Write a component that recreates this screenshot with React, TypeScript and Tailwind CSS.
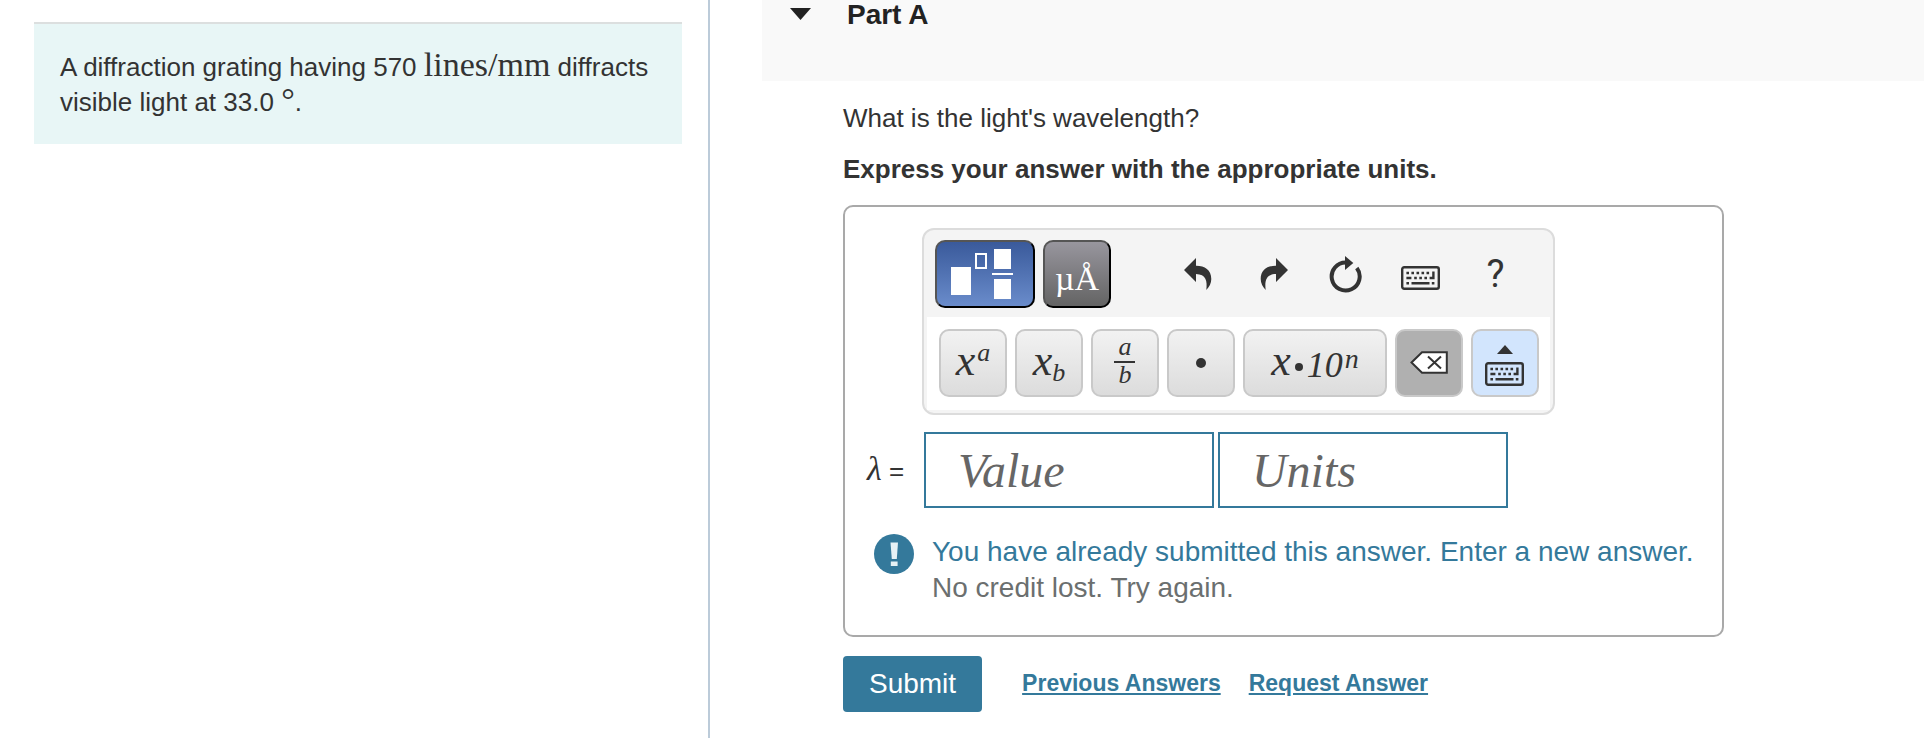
import React, { useState } from 'react';

const KeyboardIcon: React.FC = () => (
  <svg width="39" height="24" viewBox="0 0 39 24" fill="none" stroke="#333" strokeWidth="2.4" aria-hidden="true">
    <rect x="1.200" y="1.200" width="36.600" height="21.600" rx="2" />
    <path d="M5.400 7h2.600M10.400 7h2.600M15.500 7h2.600M20.500 7h2.600M25.500 7h2.600" />
    <path d="M5.400 12h5M13.200 12h2.600M18.300 12h2.600M23.400 12h2.600M28.600 12h5M32.400 5.500v7.600" />
    <path d="M5.400 17.200h2.600M10.500 17.200h18M30.800 17.200h2.600" />
  </svg>
);

const UndoIcon: React.FC = () => (
  <svg width="34" height="32" viewBox="-6 0 34 32" fill="#333" aria-hidden="true">
    <path d="M0 12 12 0v7.700C20.500 7.600 27.300 11.500 27.300 21c0 4-2 8-5 11 1.200-9-.3-15.800-10.300-16V24z" />
  </svg>
);

const RedoIcon: React.FC = () => (
  <svg width="36" height="32" viewBox="-8 0 36 32" fill="#333" aria-hidden="true">
    <path d="M28 12 16 0v7.700C7.500 7.600.7 11.500.7 21c0 4 2 8 5 11-1.200-9 .3-15.800 10.300-16V24z" />
  </svg>
);

const ResetIcon: React.FC = () => (
  <svg width="33" height="37" viewBox="0 0 33 37" aria-hidden="true">
    <path d="M17 6.500A14 14 0 1 0 27.800 12" fill="none" stroke="#333" strokeWidth="4" />
    <path d="M16 0 24.300 7 16 14z" fill="#333" />
  </svg>
);

const TemplatesIcon: React.FC = () => (
  <svg width="68" height="52" viewBox="0 0 68 52" fill="none" aria-hidden="true">
    <rect x="0" y="19" width="20" height="28" fill="#fff" />
    <rect x="25" y="6" width="10" height="14" stroke="#fff" strokeWidth="2" />
    <rect x="43" y="1" width="17" height="20" fill="#fff" />
    <path d="M41 26h21" stroke="#fff" strokeWidth="2" />
    <rect x="43" y="31" width="17" height="20" fill="#fff" />
  </svg>
);

const BackspaceIcon: React.FC = () => (
  <svg width="38" height="23" viewBox="0 0 38 23" aria-hidden="true">
    <path d="M1.500 11.500 12 1.200h24.800v20.600H12z" fill="#fff" stroke="#333" strokeWidth="2" />
    <path d="m18 5.500 13 12M31 5.500l-13 12" stroke="#333" strokeWidth="2" />
  </svg>
);

const AlertIcon: React.FC = () => (
  <svg width="40" height="40" viewBox="0 0 40 40" className="shrink-0" aria-hidden="true">
    <circle cx="20" cy="20" r="20" fill="#34799b" />
    <path d="M16.500 8.500h7.500L22.800 25h-5z" fill="#e6f1f5" />
    <rect x="16.800" y="27.500" width="6.800" height="4.500" fill="#e6f1f5" />
  </svg>
);

interface ButtonProps {
  label: string;
  className?: string;
  children: React.ReactNode;
}

const ToolButton: React.FC<ButtonProps> = ({ label, children }) => (
  <button type="button" aria-label={label} className="flex h-[68px] w-[75px] items-center justify-center">
    {children}
  </button>
);

const KeyButton: React.FC<ButtonProps> = ({
  label,
  className = 'w-[68px] bg-linear-to-b from-[#f2f2f2] to-[#dcdcdc]',
  children,
}) => (
  <button
    type="button"
    aria-label={label}
    className={`flex h-[68px] items-center justify-center rounded-[10px] border-2 border-[#c9c9c9] font-['Liberation_Serif',serif] italic leading-none text-[#333] ${className}`}
  >
    {children}
  </button>
);

const MathToolbar: React.FC = () => (
  <div className="flex w-fit flex-col rounded-xl border-2 border-[#dcdcdc] bg-[#f4f4f4] px-[3px] pb-[3px]">
    <div className="flex items-start justify-between pt-[10px] pr-[17px] pb-[9px] pl-2">
      <div className="flex gap-2">
        <button
          type="button"
          aria-label="Templates"
          className="flex h-[68px] w-[100px] items-center justify-center rounded-[10px] border-2 border-t-[#555] border-r-black border-b-black border-l-[#555] bg-linear-to-b from-[#3a5a9b] to-[#6a8ccb]"
        >
          <TemplatesIcon />
        </button>
        <button
          type="button"
          aria-label="Symbols"
          className="flex h-[68px] w-[68px] items-center justify-center rounded-[10px] border-2 border-t-[#555] border-r-black border-b-black border-l-[#555] bg-linear-to-b from-[#98969e] to-[#646464] pt-2 font-['Liberation_Serif',serif] text-[34px] text-white"
        >
          µÅ
        </button>
      </div>
      <div className="flex">
        <ToolButton label="Undo"><UndoIcon /></ToolButton>
        <ToolButton label="Redo"><RedoIcon /></ToolButton>
        <ToolButton label="Reset"><ResetIcon /></ToolButton>
        <ToolButton label="Keyboard shortcuts"><span className="pt-2"><KeyboardIcon /></span></ToolButton>
        <ToolButton label="Help">
          <span className="font-[Roboto,sans-serif] text-[38px] text-[#333]">?</span>
        </ToolButton>
      </div>
    </div>
    <div className="flex gap-2 bg-white pt-3 pr-[11px] pb-[13px] pl-3">
      <KeyButton label="Exponent">
        <span className="pb-1 text-[44px]">x</span>
        <span className="pb-5 pl-[2px] text-[26px]">a</span>
      </KeyButton>
      <KeyButton label="Subscript">
        <span className="pb-1 text-[44px]">x</span>
        <span className="pt-5 text-[26px]">b</span>
      </KeyButton>
      <KeyButton label="Fraction">
        <span className="flex flex-col pb-1 text-[26px] leading-6">
          <span className="border-b-2 border-[#333] px-1 pb-[2px]">a</span>
          <span>b</span>
        </span>
      </KeyButton>
      <KeyButton label="Multiplication dot">
        <span className="h-[10px] w-[10px] rounded-full bg-[#333]" />
      </KeyButton>
      <KeyButton label="Scientific notation" className="w-[144px] bg-linear-to-b from-[#f2f2f2] to-[#dcdcdc]">
        <span className="pb-1 text-[44px]">x</span>
        <span className="mx-1 mt-2 h-2 w-2 rounded-full bg-[#333]" />
        <span className="pt-1 text-[36px]">10</span>
        <span className="pb-2 pl-[2px] text-[28px]">n</span>
      </KeyButton>
      <KeyButton label="Backspace" className="w-[68px] bg-[#b0b0b0] pb-[2px]">
        <BackspaceIcon />
      </KeyButton>
      <KeyButton label="Show keyboard" className="w-[68px] bg-[#d2e5fd]">
        <span className="flex flex-col items-center gap-2 pt-1">
          <svg width="16" height="9" viewBox="0 0 16 9" fill="#333" aria-hidden="true">
            <path d="M8 0l8 9H0z" />
          </svg>
          <KeyboardIcon />
        </span>
      </KeyButton>
    </div>
  </div>
);

const App: React.FC = () => {
  const [value, setValue] = useState('');
  const [units, setUnits] = useState('');

  return (
    <div className="flex min-h-screen bg-white font-['Liberation_Sans',Arial,sans-serif] text-[26px] text-[#333]">
      <aside className="w-[36.9%] shrink-0 border-r-2 border-[#bccbd9] pt-[22px] pr-[26px] pl-[34px]">
        <p className="border-t-2 border-[#dcdfdf] bg-[#e8f6f6] px-[26px] pt-[26px] pb-6 leading-[35px]">
          A diffraction grating having 570{' '}
          <span className="font-['Liberation_Serif',serif] text-[34px] leading-7">lines/mm</span> diffracts visible
          light at 33.0 <span className="font-['Liberation_Serif',serif] text-[34px] leading-7">°</span>.
        </p>
      </aside>

      <main className="min-w-0 grow pl-[52px]">
        <header className="h-[81px] bg-[#f9f9f9] pl-7">
          <button type="button" className="flex items-start gap-9">
            <svg width="21" height="20" viewBox="0 0 21 20" fill="#222" aria-hidden="true">
              <path d="M0 8h21L10.500 20z" />
            </svg>
            <span className="text-[28px] leading-[30px] font-bold text-[#222]">Part A</span>
          </button>
        </header>

        <form className="pt-[19px] pr-[200px] pb-5 pl-[81px]" onSubmit={(e) => e.preventDefault()}>
          <p className="leading-9">What is the light's wavelength?</p>
          <p className="pt-[15px] leading-9 font-bold">Express your answer with the appropriate units.</p>

          <div className="mt-[18px] rounded-[10px] border-2 border-[#a9a9a9] pt-[21px] pb-[29px]">
            <div className="pl-[77px]">
              <MathToolbar />
            </div>

            <div className="mt-[17px] flex items-center pl-[22px]">
              <label htmlFor="value" className="w-[57px] pb-1">
                <span className="font-['Liberation_Serif',serif] text-[34px] italic">λ</span> =
              </label>
              <div className="flex gap-1">
                <input
                  id="value"
                  value={value}
                  onChange={(e) => setValue(e.target.value)}
                  placeholder="Value"
                  className="h-[76px] w-[290px] border-2 border-[#34799b] px-8 font-['Liberation_Serif',serif] text-[48px] italic placeholder:text-[#666]"
                />
                <input
                  aria-label="Units"
                  value={units}
                  onChange={(e) => setUnits(e.target.value)}
                  placeholder="Units"
                  className="h-[76px] w-[290px] border-2 border-[#34799b] px-8 font-['Liberation_Serif',serif] text-[48px] italic placeholder:text-[#666]"
                />
              </div>
            </div>

            <div className="mt-[26px] flex gap-[18px] pl-[29px] text-[28px] leading-9">
              <AlertIcon />
              <div>
                <p className="text-[#34799b]">You have already submitted this answer. Enter a new answer.</p>
                <p className="text-[#6b6f6f]">No credit lost. Try again.</p>
              </div>
            </div>
          </div>

          <div className="mt-[19px] flex items-center">
            <button type="submit" className="h-14 rounded-[4px] bg-[#34799b] px-[26px] text-[28px] text-white">
              Submit
            </button>
            <div className="flex gap-7 pb-[2px] pl-10 text-[23px] font-bold text-[#34799b]">
              <a href="#previous" className="underline">Previous Answers</a>
              <a href="#request" className="underline">Request Answer</a>
            </div>
          </div>
        </form>
      </main>
    </div>
  );
};

export default App;
